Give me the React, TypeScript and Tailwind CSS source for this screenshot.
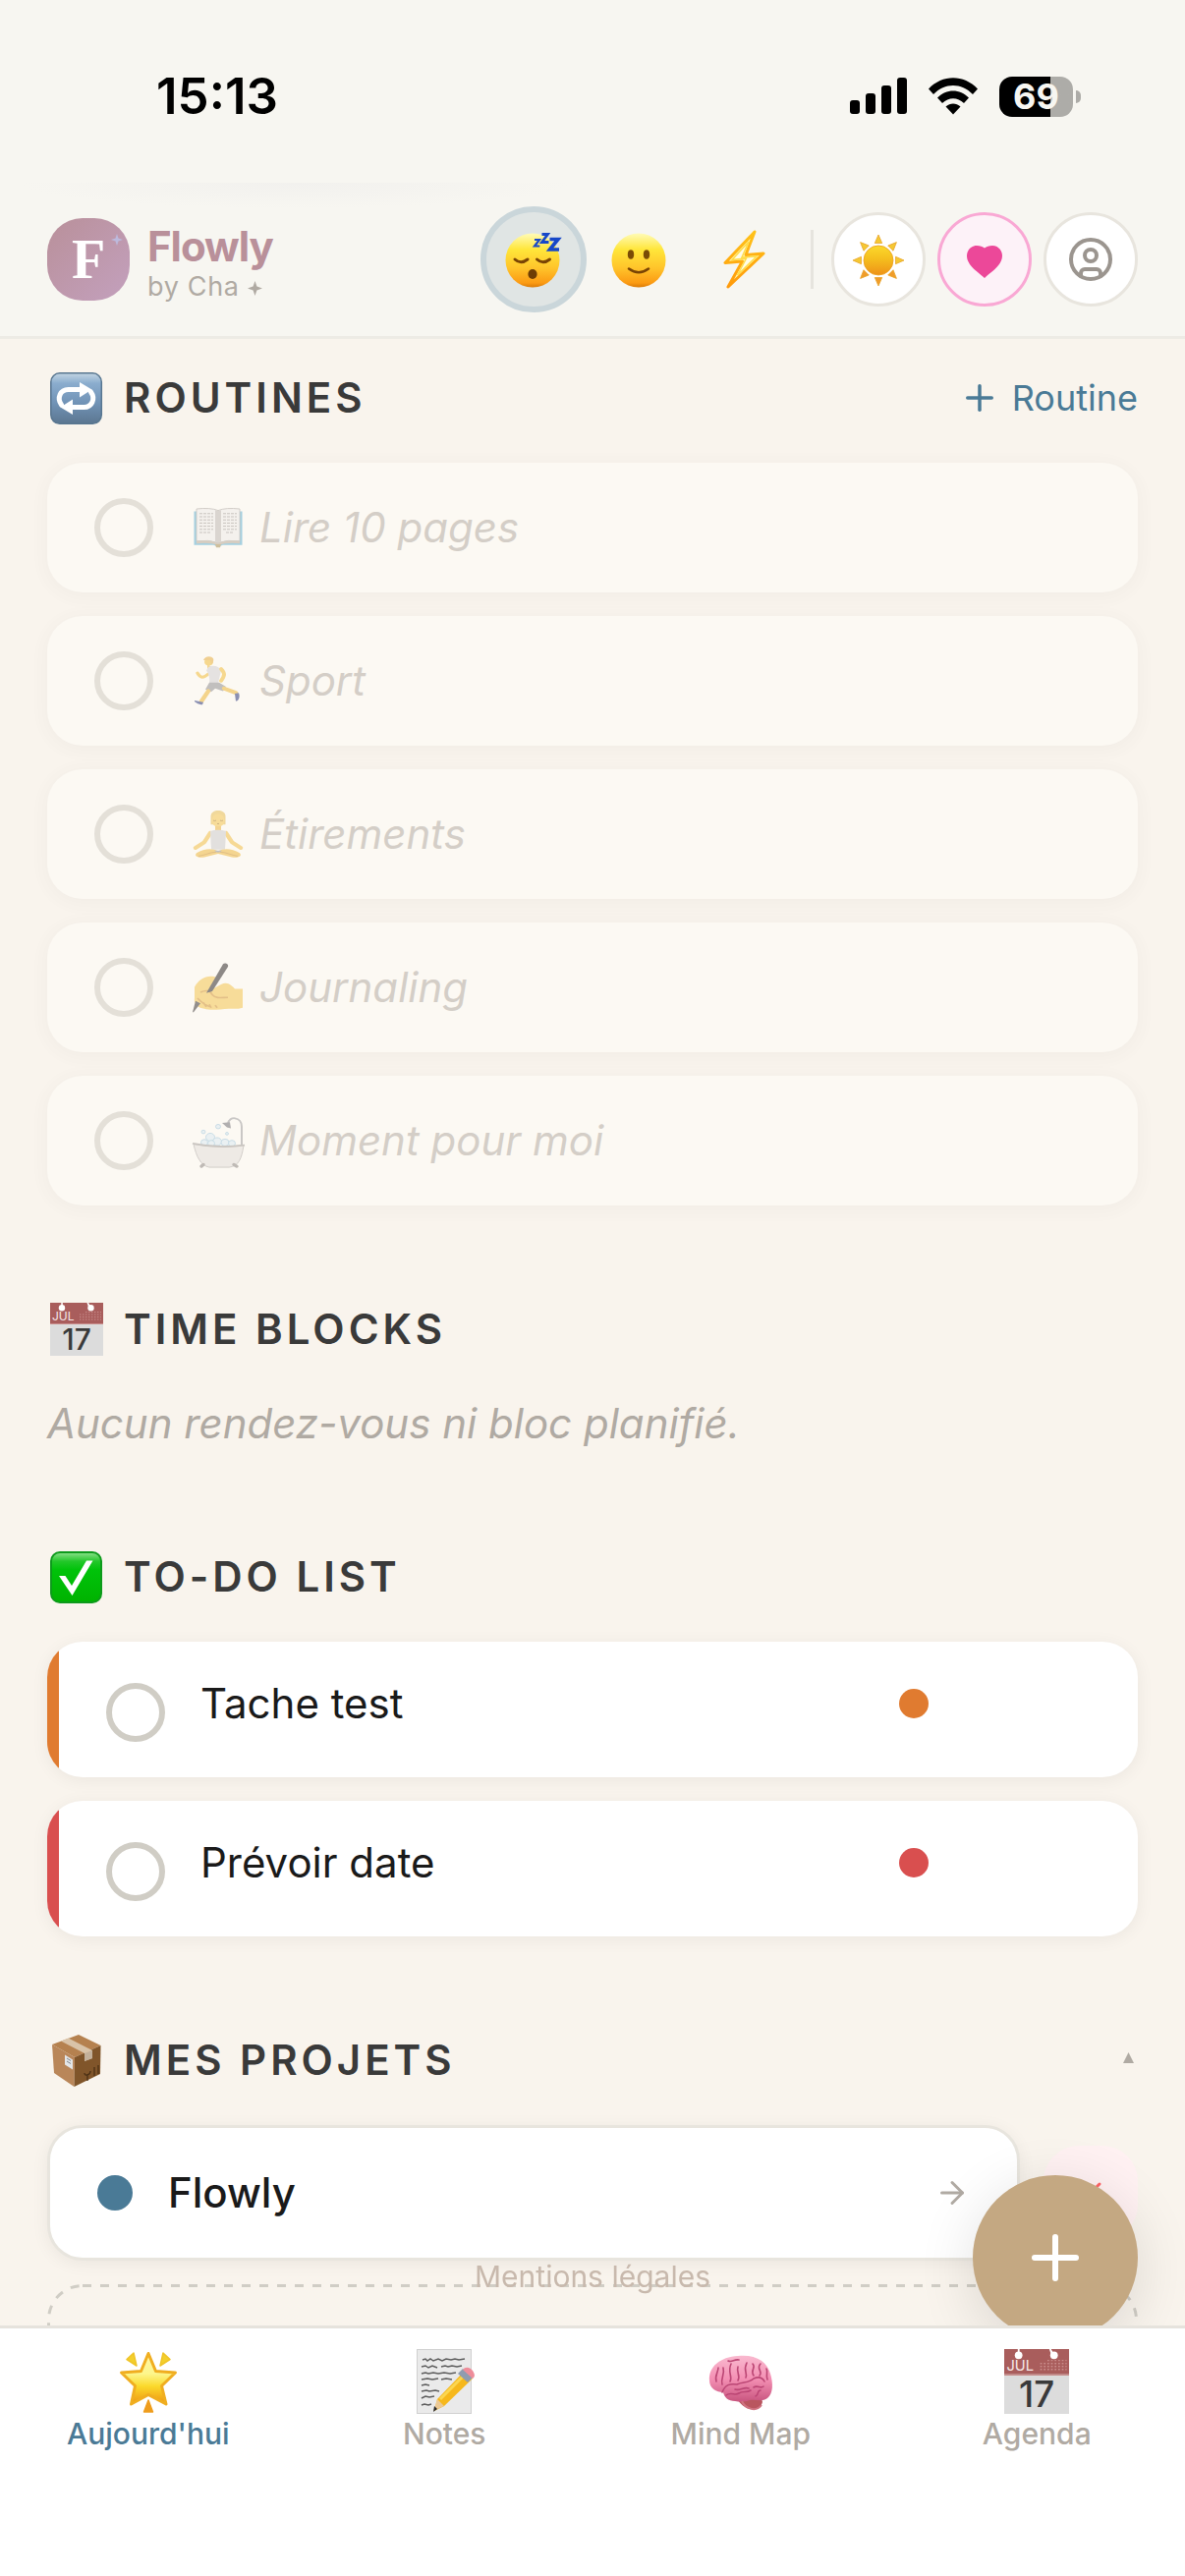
import React, { useState } from 'react';
import { ArrowRight, CircleUser, Plus, X } from 'lucide-react';

type IconProps = { className?: string };

/* ---------- Emoji drawings ---------- */

const FaceGradient = ({ id }: { id: string }) => (
  <defs>
    <linearGradient id={id} x1="0" y1="0" x2="0" y2="1">
      <stop offset="0" stopColor="#fffbb8" />
      <stop offset="0.3" stopColor="#ffe63a" />
      <stop offset="0.65" stopColor="#ffc32a" />
      <stop offset="0.92" stopColor="#fb9a13" />
      <stop offset="1" stopColor="#d97a06" />
    </linearGradient>
  </defs>
);

const SleepyEmoji = ({ className }: IconProps) => (
  <svg viewBox="0 0 60 60" className={className} aria-hidden="true">
    <FaceGradient id="sleepy" />
    <circle cx="29" cy="31" r="27.500" fill="url(#sleepy)" />
    <g fill="none" stroke="#7a4404" strokeWidth="3" strokeLinecap="round">
      <path d="M11 30q6 5.500 13 0" />
      <path d="M33.500 30q6 5.500 13 0" />
    </g>
    <ellipse cx="29" cy="45" rx="4.600" ry="5" fill="#6d3d05" />
    <g fill="none" stroke="#1848c8" strokeLinejoin="miter">
      <path strokeWidth="2.200" d="M31 10h5l-5 6.500h5.300" />
      <path strokeWidth="2.800" d="M38.500 4.500h6l-6 8h7" />
      <path strokeWidth="3.600" d="M46.500 9.500h8.500l-8.500 10.500h9.500" />
    </g>
  </svg>
);

const SmileEmoji = ({ className }: IconProps) => (
  <svg viewBox="0 0 60 60" className={className} aria-hidden="true">
    <FaceGradient id="smile" />
    <circle cx="29" cy="31" r="27.500" fill="url(#smile)" />
    <ellipse cx="21" cy="25" rx="3.200" ry="4.800" fill="#7a4b06" />
    <ellipse cx="37" cy="25" rx="3.200" ry="4.800" fill="#7a4b06" />
    <path d="M19 39.500q10 7.500 20 0" fill="none" stroke="#7a4404" strokeWidth="2.600" strokeLinecap="round" />
  </svg>
);

const BoltEmoji = ({ className }: IconProps) => (
  <svg viewBox="0 0 60 60" className={className} aria-hidden="true">
    <defs>
      <linearGradient id="bolt" x1="0" y1="0" x2="0" y2="1">
        <stop offset="0" stopColor="#ffc21a" />
        <stop offset="1" stopColor="#ff9a0a" />
      </linearGradient>
    </defs>
    <path d="M39 2 9 33.500l17.500-1.500L12 58l36-34-18 1.500z" fill="#fff7b0" stroke="url(#bolt)" strokeWidth="3" strokeLinejoin="round" />
    <path d="m33 12-17 18.500 14.500-1.500-9 17L41 27l-15 1z" fill="#fffde8" stroke="#ffdc4a" strokeWidth="1.500" />
  </svg>
);

const SunEmoji = ({ className }: IconProps) => (
  <svg viewBox="0 0 60 60" className={className} aria-hidden="true">
    <defs>
      <linearGradient id="sun" x1="0" y1="0" x2="0" y2="1">
        <stop offset="0" stopColor="#fbd92c" />
        <stop offset="0.45" stopColor="#f5be1e" />
        <stop offset="1" stopColor="#ee9218" />
      </linearGradient>
    </defs>
    <circle cx="30" cy="31" r="15" fill="url(#sun)" stroke="#eaa01c" strokeWidth="0.800" />
    {[0, 45, 90, 135, 180, 225, 270, 315].map((a) => (
      <path
        key={a}
        d="M30 5l3.700 8.500h-7.400z"
        fill={a > 90 && a < 270 ? '#f09c2a' : '#f5c832'}
        stroke="#e9a428"
        strokeWidth="0.800"
        transform={`rotate(${a} 30 31)`}
      />
    ))}
  </svg>
);

const RepeatEmoji = ({ className }: IconProps) => (
  <svg viewBox="0 0 60 60" className={className} aria-hidden="true">
    <defs>
      <linearGradient id="repeat" x1="0" y1="0" x2="0" y2="1">
        <stop offset="0" stopColor="#c3d5e3" />
        <stop offset="0.2" stopColor="#8badce" />
        <stop offset="0.6" stopColor="#7092b5" />
        <stop offset="1" stopColor="#5b7690" />
      </linearGradient>
    </defs>
    <rect x="3.800" y="4.800" width="51.500" height="51.500" rx="9" fill="url(#repeat)" stroke="#587690" strokeWidth="1.500" />
    <g fill="none" stroke="#fff" strokeWidth="5" strokeLinecap="round">
      <path d="M14.500 37c-5-7-1-15.500 7-15.500h12" />
      <path d="M44.500 24c5 7 1 15.500-7 15.500h-12" />
    </g>
    <path d="M33 14l12.500 7.500L33 29.500zM26 31.500l-12.500 8L26 47z" fill="#fff" />
  </svg>
);

const CalendarEmoji = ({ className }: IconProps) => (
  <svg viewBox="0 0 54 54" className={`overflow-visible tracking-normal ${className}`} aria-hidden="true">
    <rect width="54" height="54" fill="#dcdcdc" />
    <rect width="54" height="21" fill="#a95d5c" />
    <path d="M0 21.500h54" stroke="#c98d8b" strokeWidth="1" />
    <g fill="#fff">
      <circle cx="12" cy="5.200" r="3.200" />
      <circle cx="41.500" cy="5.200" r="3.200" />
      <path d="M11.300 0h1.500v5h-1.500zM37.500 0h1.500l3 5-2.500.5z" />
    </g>
    <g stroke="#c98d8b" strokeWidth="1.200" strokeDasharray="1.400 1.600">
      <path d="M30 12h22M30 14.500h22M30 17h22M36 9.500h16" />
    </g>
    <text x="2" y="18" fill="#f6e9e9" fontFamily="Inter, sans-serif" fontWeight="400" fontSize="12">JUL</text>
    <text x="27" y="48" textAnchor="middle" fill="#3a3a3a" fontFamily="Inter, sans-serif" fontWeight="500" fontSize="30">17</text>
  </svg>
);

const CheckEmoji = ({ className }: IconProps) => (
  <svg viewBox="0 0 60 60" className={className} aria-hidden="true">
    <defs>
      <linearGradient id="check" x1="0" y1="0" x2="0" y2="1">
        <stop offset="0" stopColor="#8ee08c" />
        <stop offset="0.18" stopColor="#23c72a" />
        <stop offset="0.35" stopColor="#00c30a" />
        <stop offset="1" stopColor="#00b200" />
      </linearGradient>
    </defs>
    <rect x="4" y="5" width="51" height="51" rx="9" fill="url(#check)" stroke="#0e9a1c" strokeWidth="2" />
    <path d="M12 29h6.500l6.500 10 15-25.500h6.500L25.500 49z" fill="#fff" />
  </svg>
);

const PackageEmoji = ({ className }: IconProps) => (
  <svg viewBox="0 0 60 60" className={className} aria-hidden="true">
    <path d="M5 14 32 4l22.500 11L28 27z" fill="#b5814f" />
    <path d="M5 14 28 27l-.5 30L7 43z" fill="#b98659" />
    <path d="M28 27l26.500-12L54 44 27.500 57z" fill="#80552a" />
    <path d="M14 10.500 21.500 7.500 46 20v8l-8 3v-8z" fill="#d9c3a8" />
    <path d="M38 23l8-3v8l-8 3z" fill="#c3b09a" />
    <path d="M18 24.500l8 5v10l-8-5z" fill="#e4e6e8" />
    <path d="M20 28l4 2.500M20 31l4 2.500" stroke="#7f8890" strokeWidth="1" />
    <path d="M38 43c0 4 6 2 6-2M41 44v7M48 37v9M52 35v9" fill="none" stroke="#4c3115" strokeWidth="1.300" />
  </svg>
);

const BookEmoji = ({ className }: IconProps) => (
  <svg viewBox="0 0 60 60" className={className} aria-hidden="true">
    <g transform="translate(0 3) scale(1 0.8)">
      <path d="M5.500 13h49v43h-20q-4.500 3-9 0h-20z" fill="#56aed2" />
      <path d="M8 10q14-2 22 2v41q-10-4-22-2zM52 10q-14-2-22 2v41q10-4 22-2z" fill="#f1efee" stroke="#a5a09c" strokeWidth="1" />
      <path d="M8 51q12-2 22 2 10-4 22-2v3q-12-2-22 2-10-4-22-2z" fill="#b7a894" />
      <path d="M27 11.500q3 1 3 1t3-1v40l-3 1.500-3-1.500z" fill="#bdb8b5" />
      <path d="M11 16h14M11 20h14M11 24h14M11 28h14M11 32h14M11 36h14M11 40h12M35 16h14M35 20h14M35 24h14M35 28h14M35 32h14M35 36h14M38 40h8" stroke="#8f8b88" strokeWidth="1" strokeDasharray="3 1" />
      <path d="M27 55h6l-1 4h-4z" fill="#a58b4e" />
    </g>
  </svg>
);

const RunnerEmoji = ({ className }: IconProps) => (
  <svg viewBox="0 0 60 60" className={className} aria-hidden="true">
    <g transform="translate(0 3) scale(1 0.87)">
      <circle cx="20.500" cy="9" r="4.500" fill="#f5bd31" />
      <path d="M15 7c1-5 8-6 10-2 1 3-1 6-2 7l-1-5z" fill="#e8ac35" />
      <path d="M19 12l5 3-1 4-4-2z" fill="#f3ba2e" />
      <path d="M9 22c3 6 6 6 11 1" fill="none" stroke="#f5bd31" strokeWidth="3.500" strokeLinecap="round" />
      <path d="M20 15c5-3 11-1 13 4l-3 15h-9c1-7-1-12-3-15z" fill="#d2d2d6" />
      <path d="M33 17c4 5 4 8 0 14" fill="none" stroke="#f5bd31" strokeWidth="4" strokeLinecap="round" />
      <path d="M21 33h10l7 5-3 5-8-3-4 4-6-3z" fill="#8b8b90" />
      <path d="M20 43 13 55M36 40l12 5" fill="none" stroke="#f0b52c" strokeWidth="4.500" strokeLinecap="round" />
      <path d="M6 54l9 2-1 3c-3 0-7-2-8-4zM47 46l1 9 2-1c2-3 2-6 1-9z" fill="#1f2f78" />
    </g>
  </svg>
);

const LotusEmoji = ({ className }: IconProps) => (
  <svg viewBox="0 0 60 60" className={className} aria-hidden="true">
    <g transform="translate(0 5) scale(1 0.85)">
      <path d="M22.500 8c0-9 15-9 15 0v10h-15z" fill="#e9bd4b" />
      <ellipse cx="30" cy="13" rx="6.500" ry="8" fill="#f7c648" />
      <path d="M27 20h6v5h-6z" fill="#eeb63a" />
      <path d="M22 28 16 39 7 46M38 28l6 11 9 7" fill="none" stroke="#f4bf3f" strokeWidth="4.500" strokeLinecap="round" strokeLinejoin="round" />
      <path d="M22 26c5-2 11-2 16 0l-1 22H23z" fill="#cdcdd1" />
      <path d="M8 52c8-6 17-6 22-2 5-4 14-4 22 2 3 4-2 6-8 5l-14-4-14 4c-6 1-11-1-8-5z" fill="#f1b835" />
      <path d="M25 13q1.500 1 3 0M32 13q1.500 1 3 0M29 17h2" fill="none" stroke="#9b6a16" strokeWidth="1" />
      <path d="M10 56c8-2 12-5 18-5M50 56c-8-2-12-5-18-5" fill="none" stroke="#c98a22" strokeWidth="1.200" />
      <path d="M26 49q4 5 8 0z" fill="#8d8d92" />
    </g>
  </svg>
);

const WritingEmoji = ({ className }: IconProps) => (
  <svg viewBox="0 0 60 60" className={className} aria-hidden="true">
    <g transform="translate(0 5) scale(1 0.88)">
      <path d="M6 28c4-9 12-14 20-12 5 2 2 6-2 10l-3 6 12-7c7-4 11 2 14 5h8v22c-6 2-10 1-14 1-10 1-20 2-25 0-7-1-11-6-10-12z" fill="#f7c648" />
      <path d="M9 41c5 6 8 8 13 10M15 46l3 5M21 48l2 4M27 49l2 3M12 34c6-3 10-2 12 3 4 5 10 3 16 3" fill="none" stroke="#cf8d26" strokeWidth="1.800" />
      <path d="M35 1.500c2-2 6 0 5 3L24 33l-6 2z" fill="#232021" />
      <path d="M7 44l5 3L5 57l-1 0z" fill="#2e2b2c" />
    </g>
  </svg>
);

const BathEmoji = ({ className }: IconProps) => (
  <svg viewBox="0 0 60 60" className={className} aria-hidden="true">
    <g transform="translate(0 4) scale(1 0.9)">
      <path d="M54 34V13c0-11-13-13-14-3" fill="none" stroke="#9b9b9f" strokeWidth="2" />
      <path d="M34 9l8-1 1 7-4-1z" fill="#6c6c72" />
      <g fill="#dceef7" stroke="#8fc0dc" strokeWidth="0.900">
        <circle cx="16" cy="31" r="3.500" />
        <circle cx="22" cy="25" r="4.500" />
        <circle cx="29" cy="30" r="4.500" />
        <circle cx="37" cy="31" r="4" />
        <circle cx="44" cy="32" r="3.500" />
        <circle cx="23" cy="32" r="3.500" />
        <circle cx="15" cy="19" r="2" />
        <circle cx="30" cy="13" r="2.500" />
        <circle cx="39" cy="21" r="1.500" />
      </g>
      <path d="M5 33q25 5 51 1c-2 15-5 24-15 25H21C12 57 8 47 5 33z" fill="#e4e1df" stroke="#aaa6a3" strokeWidth="1" />
      <path d="M4 32q26 6 53 2" fill="none" stroke="#9c9895" strokeWidth="2" />
      <path d="M15 56l-2 2M46 56l3 2" stroke="#86827f" strokeWidth="3.500" strokeLinecap="round" />
    </g>
  </svg>
);

const StarEmoji = ({ className }: IconProps) => (
  <svg viewBox="0 0 66 66" className={className} aria-hidden="true">
    <defs>
      <linearGradient id="star" x1="0" y1="0" x2="0" y2="1">
        <stop offset="0" stopColor="#fff6a8" />
        <stop offset="0.4" stopColor="#fdf68c" />
        <stop offset="0.65" stopColor="#fbd92a" />
        <stop offset="1" stopColor="#ee9412" />
      </linearGradient>
    </defs>
    <path d="M33 4.500 40.500 22.500 60.500 24 46.500 37.500 51 56 33 46.500 15.500 56 19.500 37.500 5.500 24 25.500 22.500z" fill="url(#star)" stroke="#f0ae20" strokeWidth="3" strokeLinejoin="round" />
    <path d="M18 4l3 13-10-6.500zM48 4l-3 13 10-6.500z" fill="#f3cf2c" stroke="#f0c428" strokeWidth="1.500" strokeLinejoin="round" />
    <path d="M33 52l4.500 12h-9z" fill="#ef9d1c" stroke="#ef9d1c" strokeWidth="1.500" strokeLinejoin="round" />
  </svg>
);

const NotesEmoji = ({ className }: IconProps) => (
  <svg viewBox="0 0 66 66" className={className} aria-hidden="true">
    <rect x="5.500" y="0.500" width="55" height="65" fill="#eaeaea" stroke="#d0d0d0" strokeWidth="1" />
    <g fill="none" stroke="#5e5e5e" strokeWidth="1.500">
      <path d="M11 11l3-1 2 2 3-2 3 2 5-2 4 2 4-2 5 1 4-1 4 1 6-1" />
      <path d="M10 18l4-1 3 2 4-2 5 2M30 18l4-1 3 1 4-1 5 1 5-1" />
      <path d="M10 25l4-1 3 1 5-1 5 1 6-1 6 1 6-1" />
      <path d="M10 31l6-1 5 1 6-1M30 31l5-1 6 1" />
      <path d="M10 37l4-1 4 1M10 43l5-1 3 1 6-1 4 1M10 50l4-2 4 1 5-1M10 57l3-1 4 1 3-1" />
    </g>
    <path d="M23 63l3-12 28-29 8 8-29 28z" fill="#f6b81c" />
    <path d="M26 51l7 7-11 5z" fill="#ecc994" />
    <path d="M23 58l3 3-4 3z" fill="#2b2b2b" />
    <path d="M29 51l27-27" stroke="#fbd650" strokeWidth="3" />
    <path d="M47 25l5-5 10 9-5 5z" fill="#8f9cb0" />
    <path d="M52 21c3-4 8-2 10 1s3 6 0 8z" fill="#ee8d9a" />
  </svg>
);

const BrainEmoji = ({ className }: IconProps) => (
  <svg viewBox="0 0 66 66" className={className} aria-hidden="true">
    <defs>
      <linearGradient id="brain" x1="0" y1="0" x2="0" y2="1">
        <stop offset="0" stopColor="#f9b9cf" />
        <stop offset="0.5" stopColor="#f490b4" />
        <stop offset="1" stopColor="#c8557f" />
      </linearGradient>
    </defs>
    <path d="M30 52c6 10 22 14 25 2l-2-8z" fill="#b9565f" />
    <path d="M1 32C0 18 12 8 30 7c18-2 30 6 33 18 3 10 3 20-3 25-5 4-12 1-18 2-5 2-10 2-15 1-7 0-11-4-12-9C8 44 1 40 1 32z" fill="url(#brain)" />
    <g fill="none" stroke="#bb4674" strokeWidth="1.600" strokeLinecap="round">
      <path d="M14 44c3-8 8-9 15-8 6-3 12-1 17-6 5-2 9-1 11 3" />
      <path d="M8 33c-2-6 2-9 2-14M14 36c-2-6 3-10 1-17M22 33c3-5-3-9 1-18M30 32c3-5-2-8 0-14M38 29c2-5-3-7 1-15M46 27c-4-6 3-8-1-12M52 27c4-4-4-7 1-12M60 31c-2-5 1-7-1-11" />
      <path d="M18 47c5-4 9 1 13-2s8 0 12-3M27 41c5 2 9-3 14-1M46 39c4-3 7 2 10-1M48 48c4-2 1-6 5-6M20 12c4 2 6-2 11-1" />
    </g>
    <path d="M34 53c3 7 14 12 20 4" fill="none" stroke="#cf7380" strokeWidth="2" />
  </svg>
);

/* ---------- Data ---------- */

const routines = [
  { id: 'lire', icon: BookEmoji, label: 'Lire 10 pages' },
  { id: 'sport', icon: RunnerEmoji, label: 'Sport' },
  { id: 'etirements', icon: LotusEmoji, label: 'Étirements' },
  { id: 'journaling', icon: WritingEmoji, label: 'Journaling' },
  { id: 'moment', icon: BathEmoji, label: 'Moment pour moi' },
];

const todos = [
  { id: 'tache', label: 'Tache test', color: 'bg-[#e07b30]' },
  { id: 'date', label: 'Prévoir date', color: 'bg-[#d94f4f]' },
];

const energies = [
  { id: 'low', label: 'Fatiguée', icon: SleepyEmoji },
  { id: 'ok', label: 'Bien', icon: SmileEmoji },
  { id: 'high', label: 'En forme', icon: BoltEmoji },
];

const tabs = [
  { id: 'today', label: "Aujourd'hui", icon: StarEmoji },
  { id: 'notes', label: 'Notes', icon: NotesEmoji },
  { id: 'mindmap', label: 'Mind Map', icon: BrainEmoji },
  { id: 'agenda', label: 'Agenda', icon: CalendarEmoji },
];

/* ---------- Parts ---------- */

const StatusBar = () => (
  <div className="flex h-[186px] items-start justify-between pr-[106px] pl-[159px] pt-[68px]">
    <span className="text-[51px] leading-[60px] font-semibold text-black">15:13</span>
    <div className="flex h-[60px] items-center gap-[21px]">
      <svg viewBox="0 0 58 38" className="h-[38px] w-[58px]" aria-hidden="true">
        <rect x="0" y="23" width="10" height="14" rx="3" />
        <rect x="16" y="16" width="10" height="21" rx="3" />
        <rect x="32" y="8" width="10" height="29" rx="3" />
        <rect x="48" y="0" width="10" height="37" rx="3" />
      </svg>
      <svg viewBox="0 0 52 38" className="h-[38px] w-[52px]" aria-hidden="true">
        <path d="M1 11.500C15-3.500 37-3.500 51 11.500L46 17C34.500 5 17.500 5 6 17z" />
        <path d="M10 20.500c9-9.500 23-9.500 32 0L37 26c-6.500-6.500-15.500-6.500-22 0z" />
        <path d="M18.500 29.500c4.500-4 10.500-4 15 0L26 37.500z" />
      </svg>
      <div className="flex items-center gap-[3px]">
        <div className="flex h-[41px] w-[75px] items-center justify-center rounded-[13px] bg-linear-to-r from-black from-70% to-[#adaca8] to-70% text-[36px] leading-[41px] font-bold text-[#f7f6f1]">
          69
        </div>
        <div className="h-[13px] w-[5px] rounded-r-full bg-[#adaca8]" />
      </div>
    </div>
  </div>
);

const SectionTitle: React.FC<{ icon: React.ReactNode; title: string; children?: React.ReactNode }> = ({ icon, title, children }) => (
  <div className="mb-9 flex h-[60px] items-center justify-between">
    <h2 className="flex items-center gap-[18px] text-[42px] leading-[60px] font-semibold tracking-[4px] text-[#3a3a3a]">
      <span className="flex size-[60px] items-center justify-center">{icon}</span>
      {title}
    </h2>
    {children}
  </div>
);

const checkboxClass = 'size-[60px] shrink-0 appearance-none rounded-full border-6 border-[#d0cdc5] checked:bg-[#d0cdc5]';
const roundButtonClass = 'flex size-24 items-center justify-center rounded-full border-3';

export default function App() {
  const [energy, setEnergy] = useState('low');
  const [tab, setTab] = useState('today');

  return (
    <div className="min-h-screen bg-[#f9f4ed] font-['Inter',sans-serif]">
      {/* Header */}
      <header className="sticky top-0 z-20 border-b-3 border-[#edebe5] bg-[#f7f6f1]">
        <StatusBar />
        <div className="flex h-[156px] items-center justify-between bg-[radial-gradient(ellipse_280px_26px_at_300px_0px,#f2f1ee,transparent)] px-12">
          <div className="flex items-center gap-[18px]">
            <div className="relative flex size-[84px] items-center justify-center rounded-[36px] bg-linear-to-br from-[#b9909a] to-[#c3a0bd]">
              <span className="font-['Liberation_Serif',serif] text-[56px] leading-[84px] font-bold text-white">F</span>
              <svg viewBox="0 0 12 12" className="absolute top-4 right-[7px] size-3" aria-hidden="true">
                <path d="M6 0l1.500 4.500L12 6 7.500 7.500 6 12 4.500 7.500 0 6l4.500-1.500z" fill="#bdb9dc" />
              </svg>
            </div>
            <div className="flex flex-col pt-3">
              <span className="text-[42px] leading-[42px] font-bold tracking-tight text-[#b9909a]">Flowly</span>
              <span className="flex items-center gap-2 text-[27px] leading-[39px] tracking-wide text-[#b0aaa3]">
                by Cha
                <svg viewBox="0 0 14 14" className="mt-1 size-[15px]" fill="currentColor" aria-hidden="true">
                  <path d="M7 0l1.800 5.200L14 7 8.800 8.800 7 14 5.200 8.800 0 7l5.200-1.800z" />
                </svg>
              </span>
            </div>
          </div>

          <div className="flex items-center">
            {energies.map(({ id, label, icon: Icon }) => (
              <button
                key={id}
                aria-label={label}
                onClick={() => setEnergy(id)}
                className={`flex size-[108px] items-center justify-center rounded-full border-6 ${
                  energy === id ? 'border-[#cad6da] bg-[#e0e5e4]' : 'border-transparent'
                }`}
              >
                <Icon className="size-[60px]" />
              </button>
            ))}
            <div className="mr-[18px] ml-3 h-[60px] w-[3px] bg-[#e6e4de]" />
            <div className="flex gap-3">
              <button aria-label="Thème clair" className={`${roundButtonClass} border-[#e8e5de] bg-white`}>
                <SunEmoji className="size-[60px]" />
              </button>
              <button aria-label="Bien-être" className={`${roundButtonClass} border-[#f9a8d4] bg-[#fdf2f8]`}>
                <svg viewBox="0 0 36 33" className="mt-1 h-[33px] w-9" fill="#ec4899" aria-hidden="true">
                  <path d="M18 33C13 28 0 20.500 0 10.500 0 4.500 4.500 0 10 0c3.500 0 6 1 8 2.500C20 1 22.500 0 26 0c5.500 0 10 4.500 10 10.500C36 20.500 23 28 18 33z" />
                </svg>
              </button>
              <button aria-label="Profil" className={`${roundButtonClass} border-[#e8e5de] bg-white text-[#9b958f]`}>
                <CircleUser className="size-12" />
              </button>
            </div>
          </div>
        </div>
      </header>

      <main className="flex flex-col gap-24 px-12 pt-[30px]">
        {/* Routines */}
        <section>
          <SectionTitle icon={<RepeatEmoji className="size-[60px]" />} title="ROUTINES">
            <button className="flex items-center gap-3 text-[36px] leading-[54px] text-[#4a7a96]">
              <Plus className="size-[42px]" />
              Routine
            </button>
          </SectionTitle>
          <div className="flex flex-col gap-6">
            {routines.map(({ id, icon: Icon, label }) => (
              <div key={id} className="flex h-[132px] items-center rounded-[36px] bg-[#fffefa] px-12 opacity-50 shadow-[0_3px_18px_rgba(0,0,0,0.06)]">
                <input id={id} type="checkbox" className={checkboxClass} />
                <label htmlFor={id} className="ml-9 flex items-center gap-3 text-[42px] leading-[60px] text-[#b0aaa3] italic">
                  <Icon className="size-[60px]" />
                  {label}
                </label>
              </div>
            ))}
          </div>
        </section>

        {/* Time blocks */}
        <section>
          <SectionTitle icon={<CalendarEmoji className="size-[54px]" />} title="TIME BLOCKS" />
          <p className="text-[42px] leading-[60px] text-[#b0aaa3] italic">Aucun rendez-vous ni bloc planifié.</p>
        </section>

        {/* To-do */}
        <section>
          <SectionTitle icon={<CheckEmoji className="size-[60px]" />} title="TO-DO LIST" />
          <div className="flex flex-col gap-6">
            {todos.map((todo) => (
              <div key={todo.id} className="flex overflow-hidden rounded-[36px] bg-white shadow-[0_3px_18px_rgba(0,0,0,0.06)]">
                <div className={`w-3 shrink-0 ${todo.color}`} />
                <div className="flex flex-1 items-start py-9 pr-[213px] pl-12">
                  <input id={todo.id} type="checkbox" className={`mt-[6px] ${checkboxClass}`} />
                  <label htmlFor={todo.id} className="ml-9 flex-1 text-[42px] leading-[54px] text-[#1a1a1a]">
                    {todo.label}
                  </label>
                  <span className={`mt-3 size-[30px] rounded-full ${todo.color}`} />
                </div>
              </div>
            ))}
          </div>
        </section>

        {/* Projects */}
        <section>
          <SectionTitle icon={<PackageEmoji className="size-[60px]" />} title="MES PROJETS">
            <button aria-label="Replier" className="flex w-5 items-center justify-center pb-[6px] text-[#b0aaa3]">
              <svg viewBox="0 0 10 10" className="size-[11px]" fill="currentColor" aria-hidden="true">
                <path d="M5 0l5 10H0z" />
              </svg>
            </button>
          </SectionTitle>
          <div className="flex items-center gap-6">
            <button className="flex h-[138px] flex-1 items-center gap-9 rounded-[36px] border-3 border-[#e8e5de] bg-white px-12 text-left shadow-[0_3px_18px_rgba(0,0,0,0.06)]">
              <span className="size-9 rounded-full bg-[#4a7a96]" />
              <span className="flex-1 text-[42px] leading-[60px] font-medium text-[#1a1a1a]">Flowly</span>
              <ArrowRight className="size-9 text-[#b0aaa3]" />
            </button>
            <button aria-label="Supprimer" className="flex size-24 items-center justify-center rounded-[36px] bg-[#fff1f2] text-[#ff6467]">
              <X className="size-9" />
            </button>
          </div>
          <button aria-label="Nouveau projet" className="mt-6 block h-[138px] w-full">
            <svg className="size-full" aria-hidden="true">
              <rect
                x="1.500"
                y="1.500"
                rx="34.500"
                className="h-[calc(100%-3px)] w-[calc(100%-3px)]"
                fill="none"
                stroke="#d0cdc5"
                strokeWidth="3"
                strokeDasharray="9 9"
              />
            </svg>
          </button>
        </section>
      </main>

      <a href="#mentions" className="fixed bottom-[282px] left-1/2 z-10 -translate-x-1/2 text-[30px] leading-[45px] text-[#c8b9ad]">
        Mentions légales
      </a>

      <button
        aria-label="Ajouter"
        className="fixed right-12 bottom-[240px] z-10 flex size-[168px] items-center justify-center rounded-full bg-[#c4a882] text-white shadow-[0_12px_60px_rgba(0,0,0,0.12)]"
      >
        <Plus className="size-[72px]" />
      </button>

      {/* Bottom navigation */}
      <nav className="fixed inset-x-0 bottom-0 z-20 grid h-[255px] grid-cols-4 items-start border-t-3 border-[#e6e3dd] bg-white pt-[21px]">
        {tabs.map(({ id, label, icon: Icon }) => (
          <button
            key={id}
            onClick={() => setTab(id)}
            className={`flex flex-col items-center text-[30px] leading-10 font-medium ${tab === id ? 'text-[#4a7a96]' : 'text-[#b0aaa3]'}`}
          >
            <Icon className="size-[66px]" />
            {label}
          </button>
        ))}
      </nav>
    </div>
  );
}
